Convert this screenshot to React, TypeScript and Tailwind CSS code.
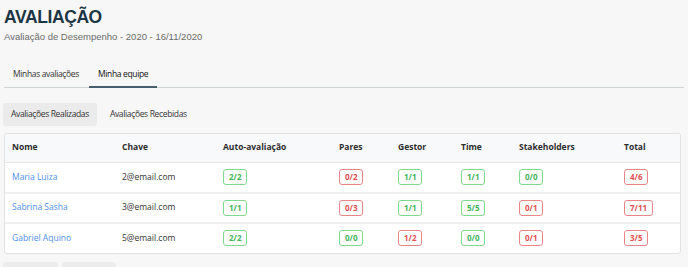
const rows = [
  { nome: "Maria Luiza", chave: "2@email.com", vals: ["2/2", "0/2", "1/1", "1/1", "0/0", "4/6"], ok: [true, false, true, true, true, false] },
  { nome: "Sabrina Sasha", chave: "3@email.com", vals: ["1/1", "0/3", "1/1", "5/5", "0/1", "7/11"], ok: [true, false, true, true, false, false] },
  { nome: "Gabriel Aquino", chave: "5@email.com", vals: ["2/2", "0/0", "1/2", "0/0", "0/1", "3/5"], ok: [true, true, false, true, false, false] },
];

const cols = [
  { label: "Nome", w: "w-[110px]" },
  { label: "Chave", w: "w-[101px]" },
  { label: "Auto-avaliação", w: "w-[116px]" },
  { label: "Pares", w: "w-[59px]" },
  { label: "Gestor", w: "w-[63px]" },
  { label: "Time", w: "w-[58px]" },
  { label: "Stakeholders", w: "w-[105px]" },
  { label: "Total", w: "" },
];

const Badge = ({ text, ok }: { text: string; ok: boolean }) => (
  <span
    className={
      "inline-flex h-[16px] min-w-[24px] items-center justify-center rounded-[3px] border-[1.5px] px-[5px] text-[8px] font-bold leading-none " +
      (ok ? "border-[#7fd98c] text-[#43b45a]" : "border-[#e98585] text-[#df4f4f]")
    }
  >
    {text}
  </span>
);

export default function App() {
  return (
    <div className="h-[267px] w-[688px] overflow-hidden bg-[#f7f7f7] font-['Open_Sans',sans-serif]">
      <div className="px-[4px] pt-[6px]">
        <h1 className="text-[17.5px] font-extrabold leading-[22px] tracking-[-0.4px] text-[#1c3646] font-['Liberation_Sans',sans-serif]">
          AVALIAÇÃO
        </h1>
        <p className="mt-[2px] text-[9.5px] leading-[13px] text-[#6b6b6b] font-['Liberation_Sans',sans-serif]">
          Avaliação de Desempenho - 2020 - 16/11/2020
        </p>

        <div className="mt-[24px] flex border-b border-[#cfd4d7] text-[8.5px] text-[#333]">
          <div className="px-[9px] pb-[6px] pt-[1px] tracking-[-0.35px]">Minhas avaliações</div>
          <div className="ml-[1px] mb-[-1px] border-b-[2px] border-[#46606d] px-[9px] pb-[5px] pt-[1px] tracking-[-0.35px] text-[#111]">
            Minha equipe
          </div>
        </div>

        <div className="mt-[15px] flex items-center gap-[5px] text-[8.5px] tracking-[-0.35px] text-[#333]">
          <div className="ml-[-1px] rounded-[3px] bg-[#ebebeb] px-[8px] py-[5px]">Avaliações Realizadas</div>
          <div className="px-[8px] py-[5px]">Avaliações Recebidas</div>
        </div>

        <div className="mt-[7px] w-[677px] overflow-hidden rounded-[3px] border border-[#e2e2e2] bg-white">
          <table className="w-full table-fixed border-collapse text-[8.5px]">
            <thead>
              <tr className="h-[29px] border-b border-[#e6e6e6] bg-[#f8f9fa]">
                {cols.map((c) => (
                  <th key={c.label} className={"pl-[7px] text-left font-bold text-[#2c2c2c] " + c.w}>
                    {c.label}
                  </th>
                ))}
              </tr>
            </thead>
            <tbody>
              {rows.map((r, i) => (
                <tr key={r.nome} className={"h-[30px] " + (i < rows.length - 1 ? "border-b-[2px] border-[#f0f0f0]" : "")}>
                  <td className="pl-[7px] text-[#4f90ec]">{r.nome}</td>
                  <td className="pl-[7px] text-[#333]">{r.chave}</td>
                  {r.vals.map((v, j) => (
                    <td key={j} className="pl-[7px]">
                      <Badge text={v} ok={r.ok[j]} />
                    </td>
                  ))}
                </tr>
              ))}
            </tbody>
          </table>
        </div>

        <div className="ml-[-1px] mt-[8px] flex gap-[4px]">
          <div className="h-[14px] w-[55px] rounded-[3px] bg-[#ececec]" />
          <div className="h-[14px] w-[54px] rounded-[3px] bg-[#ececec]" />
        </div>
      </div>
    </div>
  );
}
